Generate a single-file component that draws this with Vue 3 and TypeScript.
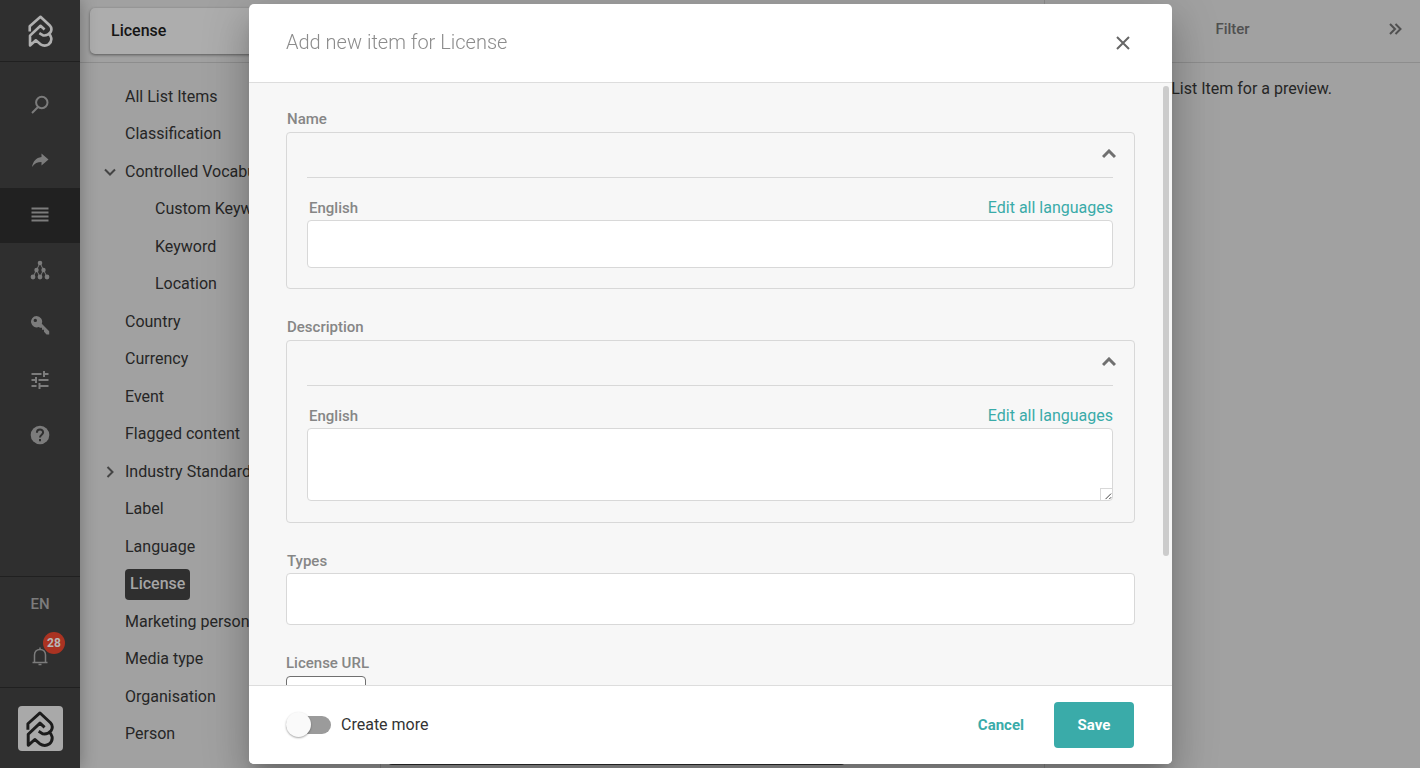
<script setup lang="ts">
import { ref } from 'vue'

interface ListEntry {
  label: string
  level?: number
  toggle?: 'open' | 'closed'
}

interface RailEntry {
  name: string
  path: string
  active?: boolean
}

const railEntries: RailEntry[] = [
  { name: 'Search', path: 'M2 18 8 12M17.500 7.500a5.700 5.700 0 1 1-11.400 0 5.700 5.700 0 0 1 11.400 0Z' },
  { name: 'Share', path: 'M11.5 3.500 18.500 9.500 11.500 15.500V12C7.500 12 4.500 13.300 2 17 3 11.500 6 7.700 11.500 7Z' },
  { name: 'List items', path: 'M1.500 2.500h17v2h-17zM1.500 6.500h17v2h-17zM1.500 10.500h17v2h-17zM1.500 14.500h17v2h-17z', active: true },
  { name: 'Channels', path: '' },
  { name: 'Permissions', path: '' },
  { name: 'Settings', path: 'M1.500 3h10v2h-10zM13 1h2v2h3.500v2H15v2h-2zM8.500 9h10v2h-10zM5 7h2v6H5v-2H1.500V9H5zM1.500 15h5v2h-5zM8.500 13h2v2h8v2h-8v2h-2z' },
  { name: 'Help', path: '' },
]

const entries: ListEntry[] = [
  { label: 'All List Items' },
  { label: 'Classification' },
  { label: 'Controlled Vocabulary', toggle: 'open' },
  { label: 'Custom Keyword', level: 1 },
  { label: 'Keyword', level: 1 },
  { label: 'Location', level: 1 },
  { label: 'Country' },
  { label: 'Currency' },
  { label: 'Event' },
  { label: 'Flagged content' },
  { label: 'Industry Standard', toggle: 'closed' },
  { label: 'Label' },
  { label: 'Language' },
  { label: 'License' },
  { label: 'Marketing person' },
  { label: 'Media type' },
  { label: 'Organisation' },
  { label: 'Person' },
]

const selected = ref('License')
const name = ref('')
const description = ref('')
const types = ref('')
const url = ref('')
const createMore = ref(false)
</script>

<template>
  <div class="app">
    <nav class="rail" aria-label="Main">
      <a class="brand" href="#" aria-label="Home">
        <svg class="logo" viewBox="0 0 84 110" aria-hidden="true">
          <path d="M5 57V39L42 6 74 36Q84 47 76 60 66 72 51 70L38 62" />
          <path d="M56 50 42 37 6 71V105L26 87 41 100Q56 110 70 101 81 92 79 79 77 70 71 66" />
        </svg>
      </a>
      <div class="rail-items">
        <a v-for="item in railEntries" :key="item.name" href="#" class="rail-item" :class="{ active: item.active }" :aria-label="item.name">
          <svg viewBox="0 0 20 20" class="rail-icon" aria-hidden="true">
            <g v-if="item.name === 'Channels'">
              <path d="M10 3 6.500 10 3 17M10 3 13.500 10 17 17M6.500 10 10 17M13.500 10 10 17" class="thin" />
              <circle cx="10" cy="3" r="2.300" /><circle cx="6.500" cy="10" r="2.200" /><circle cx="13.500" cy="10" r="2.200" />
              <circle cx="3" cy="17" r="2.400" /><circle cx="10" cy="17" r="2.400" /><circle cx="17" cy="17" r="2.400" />
            </g>
            <path v-else-if="item.name === 'Permissions'" fill-rule="evenodd" d="M6.500 1a5.700 5.700 0 1 0 2.300 11L10 12.800h2v2h2v2l2.500 2.700H19.200V16.300L11.800 8.700A5.700 5.700 0 0 0 6.500 1ZM5.300 3.700a1.700 1.700 0 1 1 0 3.400 1.700 1.700 0 0 1 0-3.400Z" />
            <g v-else-if="item.name === 'Help'">
              <circle cx="10" cy="10" r="9.300" />
              <path d="M6.900 7.700C6.900 3.400 13.200 3.500 13.100 7.500 13.100 9.600 10 9.800 10 12.400M10 14v2.200" class="mark" />
            </g>
            <path v-else :d="item.path" :class="{ outline: item.name === 'Search' }" />
          </svg>
        </a>
      </div>
      <div class="rail-status">
        <button class="locale" type="button">EN</button>
        <button class="bell" type="button" aria-label="Notifications">
          <svg viewBox="0 0 20 20" aria-hidden="true">
            <path d="M2.500 16.500h15M4.500 16V9c0-3 2-5.500 5.500-5.500s5.500 2.500 5.500 5.500v7M10 3.500V1.500" />
            <path d="M8.500 18.500h3" />
          </svg>
          <span class="badge">28</span>
        </button>
      </div>
      <div class="account">
        <button class="avatar" type="button" aria-label="Account">
          <svg class="logo" viewBox="0 0 84 110" aria-hidden="true">
            <path d="M5 57V39L42 6 74 36Q84 47 76 60 66 72 51 70L38 62" />
            <path d="M56 50 42 37 6 71V105L26 87 41 100Q56 110 70 101 81 92 79 79 77 70 71 66" />
          </svg>
        </button>
      </div>
    </nav>

    <main class="page">
      <header class="topbar">
        <h1 class="page-title">License</h1>
        <div class="filter">
          <span class="filter-title">Filter</span>
          <button class="collapse" type="button" aria-label="Collapse filter">
            <svg viewBox="0 0 14 12" aria-hidden="true"><path d="m2 1 5 5-5 5M7.500 1l5 5-5 5" /></svg>
          </button>
        </div>
      </header>
      <div class="columns">
        <ul class="list">
          <li v-for="entry in entries" :key="entry.label" :class="{ nested: entry.level }">
            <svg v-if="entry.toggle" class="caret" :class="entry.toggle" viewBox="0 0 12 12" aria-hidden="true"><path d="m3.500 1 5 5-5 5" /></svg>
            <button type="button" class="entry" :class="{ selected: selected === entry.label }" @click="selected = entry.label">{{ entry.label }}</button>
          </li>
        </ul>
        <section class="results"><div class="snack"></div></section>
        <aside class="preview"><p>Select List Item for a preview.</p></aside>
      </div>
    </main>

    <div class="overlay">
      <section class="dialog" role="dialog" aria-modal="true" aria-labelledby="dialog-title">
        <header class="dialog-head">
          <h2 id="dialog-title">Add new item for License</h2>
          <button class="close" type="button" aria-label="Close">
            <svg viewBox="0 0 14 14" aria-hidden="true"><path d="m1 1 12 12M13 1 1 13" /></svg>
          </button>
        </header>
        <div class="dialog-body">
          <form class="form">
            <div class="field">
              <span class="label">Name</span>
              <div class="group">
                <div class="group-head">
                  <button type="button" aria-label="Collapse name"><svg viewBox="0 0 14 10" aria-hidden="true"><path d="m1 8 6-6 6 6" /></svg></button>
                </div>
                <div class="group-row">
                  <label class="label" for="name-en">English</label>
                  <a href="#">Edit all languages</a>
                </div>
                <input id="name-en" v-model="name" class="control" type="text" />
              </div>
            </div>
            <div class="field">
              <span class="label">Description</span>
              <div class="group">
                <div class="group-head">
                  <button type="button" aria-label="Collapse description"><svg viewBox="0 0 14 10" aria-hidden="true"><path d="m1 8 6-6 6 6" /></svg></button>
                </div>
                <div class="group-row">
                  <label class="label" for="description-en">English</label>
                  <a href="#">Edit all languages</a>
                </div>
                <div class="area">
                  <textarea id="description-en" v-model="description" class="control"></textarea>
                  <svg class="grip" viewBox="0 0 12 12" aria-hidden="true"><path d="m5 11 6-6M9 11l2-2" /></svg>
                </div>
              </div>
            </div>
            <div class="field">
              <label class="label" for="types">Types</label>
              <input id="types" v-model="types" class="control types" type="text" />
            </div>
            <div class="field url-field">
              <label class="label" for="url">License URL</label>
              <input id="url" v-model="url" class="control url" type="text" />
            </div>
          </form>
          <div class="thumb"></div>
        </div>
        <footer class="dialog-foot">
          <label class="switch">
            <input v-model="createMore" type="checkbox" role="switch" />
            <span>Create more</span>
          </label>
          <div class="actions">
            <button type="button" class="cancel">Cancel</button>
            <button type="button" class="save">Save</button>
          </div>
        </footer>
      </section>
    </div>
  </div>
</template>

<style>
body {
  background: #a1a1a1;
}
</style>

<style scoped>
* {
  box-sizing: border-box;
}

.app {
  display: flex;
  height: 100vh;
  overflow: hidden;
  background: #a1a1a1;
  color: #262626;
  font: 16px/20px Roboto, sans-serif;
}

button {
  padding: 0;
  border: 0;
  background: none;
  color: inherit;
  font: inherit;
}

svg {
  display: block;
  fill: none;
  stroke: currentColor;
}

.rail {
  z-index: 1;
  display: flex;
  flex: none;
  flex-direction: column;
  width: 80px;
  background: #2f2f2f;
  color: #7c7c7c;
  box-shadow: 0 0 16px rgba(0, 0, 0, 0.3);
}

.brand {
  display: flex;
  align-items: center;
  justify-content: center;
  height: 62px;
  border-bottom: 1px solid #202020;
  color: #b0b0b0;
}

.logo {
  width: 25px;
  height: 32px;
  stroke-width: 9;
  stroke-linejoin: round;
}

.rail-items {
  flex: 1;
  padding-top: 16px;
}

.rail-item {
  display: flex;
  align-items: center;
  justify-content: center;
  height: 55px;
  padding-bottom: 1px;
  color: inherit;
}

.rail-item.active {
  background: #212121;
}

.rail-icon {
  width: 20px;
  height: 20px;
  fill: currentColor;
  stroke: none;
}

.rail-icon .outline {
  fill: none;
  stroke: currentColor;
  stroke-width: 2;
}

.rail-icon .thin {
  fill: none;
  stroke: currentColor;
  stroke-width: 1;
}

.rail-icon .mark {
  fill: none;
  stroke: #2f2f2f;
  stroke-width: 2;
}

.rail-status {
  display: flex;
  flex-direction: column;
  align-items: center;
  height: 111px;
  padding-top: 17px;
  border-top: 1px solid #202020;
}

.locale {
  font-size: 15px;
  font-weight: 500;
}

.bell {
  position: relative;
  margin-top: 32px;
}

.bell svg {
  width: 20px;
  height: 20px;
  stroke-width: 1.5;
}

.badge {
  position: absolute;
  top: -14px;
  left: 13px;
  width: 22px;
  height: 22px;
  border-radius: 50%;
  background: #aa3322;
  color: #b8b8b8;
  font-size: 12px;
  font-weight: 700;
  line-height: 22px;
}

.account {
  display: flex;
  justify-content: center;
  height: 81px;
  padding-top: 18px;
  border-top: 1px solid #202020;
}

.avatar {
  display: flex;
  align-items: center;
  justify-content: center;
  width: 45px;
  height: 45px;
  border-radius: 4px;
  background: #a9a9a9;
  color: #1c1c1c;
}

.avatar .logo {
  width: 28px;
  height: 36px;
}

.page {
  display: flex;
  flex: 1;
  flex-direction: column;
  min-width: 0;
}

.topbar {
  display: flex;
  flex: none;
  height: 63px;
  border-bottom: 1px solid #8d8d8d;
}

.page-title {
  flex: 1;
  height: 46px;
  margin: 8px 10px 0;
  padding-left: 21px;
  border-radius: 5px;
  background: #adadad;
  box-shadow: 0 1px 3px rgba(0, 0, 0, 0.45);
  color: #151515;
  font-size: 16px;
  font-weight: 500;
  line-height: 45px;
}

.filter {
  display: flex;
  align-items: center;
  width: 376px;
  padding: 0 18px 4px 32px;
  border-left: 1px solid #8d8d8d;
  color: #505050;
}

.filter-title {
  flex: 1;
  text-align: center;
  font-size: 15px;
  font-weight: 500;
}

.collapse svg {
  width: 14px;
  height: 12px;
  stroke-width: 2;
}

.columns {
  display: flex;
  flex: 1;
  min-height: 0;
}

.list {
  display: grid;
  flex: none;
  grid-auto-rows: 1fr;
  width: 300px;
  height: 690px;
  margin: 0;
  padding: 15px 0 0 24px;
  list-style: none;
}

.list li {
  display: flex;
  align-items: center;
  padding-left: 21px;
}

.list li.nested {
  padding-left: 51px;
}

.caret {
  width: 12px;
  height: 12px;
  margin: 0 9px 0 -21px;
  color: #444;
  stroke-width: 2;
}

.caret.open {
  transform: rotate(90deg);
}

.entry {
  white-space: nowrap;
}

.entry.selected {
  height: 31px;
  padding: 0 5px;
  border-radius: 4px;
  background: #2f2f2f;
  color: #a5a5a5;
  font-weight: 500;
}

.results {
  display: flex;
  flex: 1;
  align-items: flex-end;
  border-left: 1px solid #8d8d8d;
}

.snack {
  width: 457px;
  height: 48px;
  margin: 0 0 3px 7px;
  border-radius: 4px;
  background: #2f2f2f;
}

.preview {
  width: 376px;
  border-left: 1px solid #8d8d8d;
}

.preview p {
  margin: 16px 88px 0 0;
  text-align: right;
}

.overlay {
  position: fixed;
  z-index: 2;
  inset: 0;
  padding: 4px 248px 4px 249px;
}

.dialog {
  display: flex;
  flex-direction: column;
  height: 100%;
  border-radius: 5px;
  background: #fff;
  box-shadow: 0 11px 15px -7px rgba(0, 0, 0, 0.2), 0 24px 38px 3px rgba(0, 0, 0, 0.14), 0 9px 46px 8px rgba(0, 0, 0, 0.12);
}

.dialog-head {
  display: flex;
  flex: none;
  align-items: center;
  justify-content: space-between;
  height: 79px;
  padding: 0 42px 0 37px;
  border-bottom: 1px solid #ddd;
}

.dialog-head h2 {
  margin: 0;
  padding-bottom: 2px;
  color: #8c8c8c;
  font-size: 20px;
  font-weight: 300;
  line-height: 24px;
}

.close {
  color: #666;
}

.close svg {
  width: 14px;
  height: 14px;
  stroke-width: 2;
}

.dialog-body {
  position: relative;
  flex: 1;
  min-height: 0;
  background: #f7f7f7;
}

.form {
  height: 100%;
  padding: 26px 37px;
  overflow-y: auto;
  scrollbar-width: none;
}

.thumb {
  position: absolute;
  top: 3px;
  right: 3px;
  width: 6px;
  height: 470px;
  border-radius: 3px;
  background: #ccc;
}

.field {
  display: flex;
  flex-direction: column;
  margin-bottom: 28px;
}

.label {
  padding-left: 1px;
  color: #868686;
  font-size: 15px;
  font-weight: 500;
  line-height: 20px;
}

.group {
  margin-top: 3px;
  padding: 0 21px 20px 20px;
  border: 1px solid #d8d8d8;
  border-radius: 4px;
}

.group-head {
  display: flex;
  align-items: center;
  justify-content: flex-end;
  height: 45px;
  padding-bottom: 2px;
  border-bottom: 1px solid #d8d8d8;
}

.group-head button {
  margin-right: -3px;
  color: #707070;
}

.group-head svg {
  width: 14px;
  height: 10px;
  stroke-width: 3;
}

.group-row {
  display: flex;
  justify-content: space-between;
  padding: 20px 0 2px 1px;
}

.group-row a {
  color: #3aaba9;
  text-decoration: none;
}

.control {
  display: block;
  width: 100%;
  height: 48px;
  padding: 0 12px;
  border: 1px solid #d8d8d8;
  border-radius: 4px;
  outline: 0;
  background: #fff;
  font: inherit;
}

.area {
  position: relative;
  padding-bottom: 1px;
}

textarea.control {
  height: 73px;
  resize: none;
}

.grip {
  position: absolute;
  right: 1px;
  bottom: 2px;
  width: 12px;
  height: 12px;
  border-top: 1px solid #d8d8d8;
  border-left: 1px solid #d8d8d8;
  color: #333;
}

.types {
  height: 52px;
  margin-top: 2px;
}

.url-field .label {
  padding-left: 0;
}

.url {
  width: 80px;
  margin-top: 3px;
  border-color: #707070;
}

.dialog-foot {
  display: flex;
  flex: none;
  align-items: center;
  justify-content: space-between;
  height: 79px;
  padding: 0 38px 0 37px;
  border-top: 1px solid #ddd;
  border-radius: 0 0 5px 5px;
  background: #fff;
}

.switch {
  display: flex;
  align-items: center;
  gap: 10px;
  color: #333;
}

.switch input {
  position: relative;
  width: 45px;
  height: 18px;
  margin: 0;
  border-radius: 9px;
  appearance: none;
  background: #9b9b9b;
}

.switch input::before {
  content: '';
  position: absolute;
  top: -4px;
  left: 0;
  width: 25px;
  height: 25px;
  border-radius: 50%;
  background: #fafafa;
  box-shadow: 0 1px 2px rgba(0, 0, 0, 0.35);
}

.switch input:checked::before {
  left: 20px;
}

.actions {
  display: flex;
  align-items: center;
  gap: 30px;
  font-size: 15px;
  font-weight: 700;
}

.cancel {
  color: #3aaba9;
}

.save {
  width: 80px;
  height: 46px;
  border-radius: 4px;
  background: #3aaba9;
  color: #fff;
}
</style>
